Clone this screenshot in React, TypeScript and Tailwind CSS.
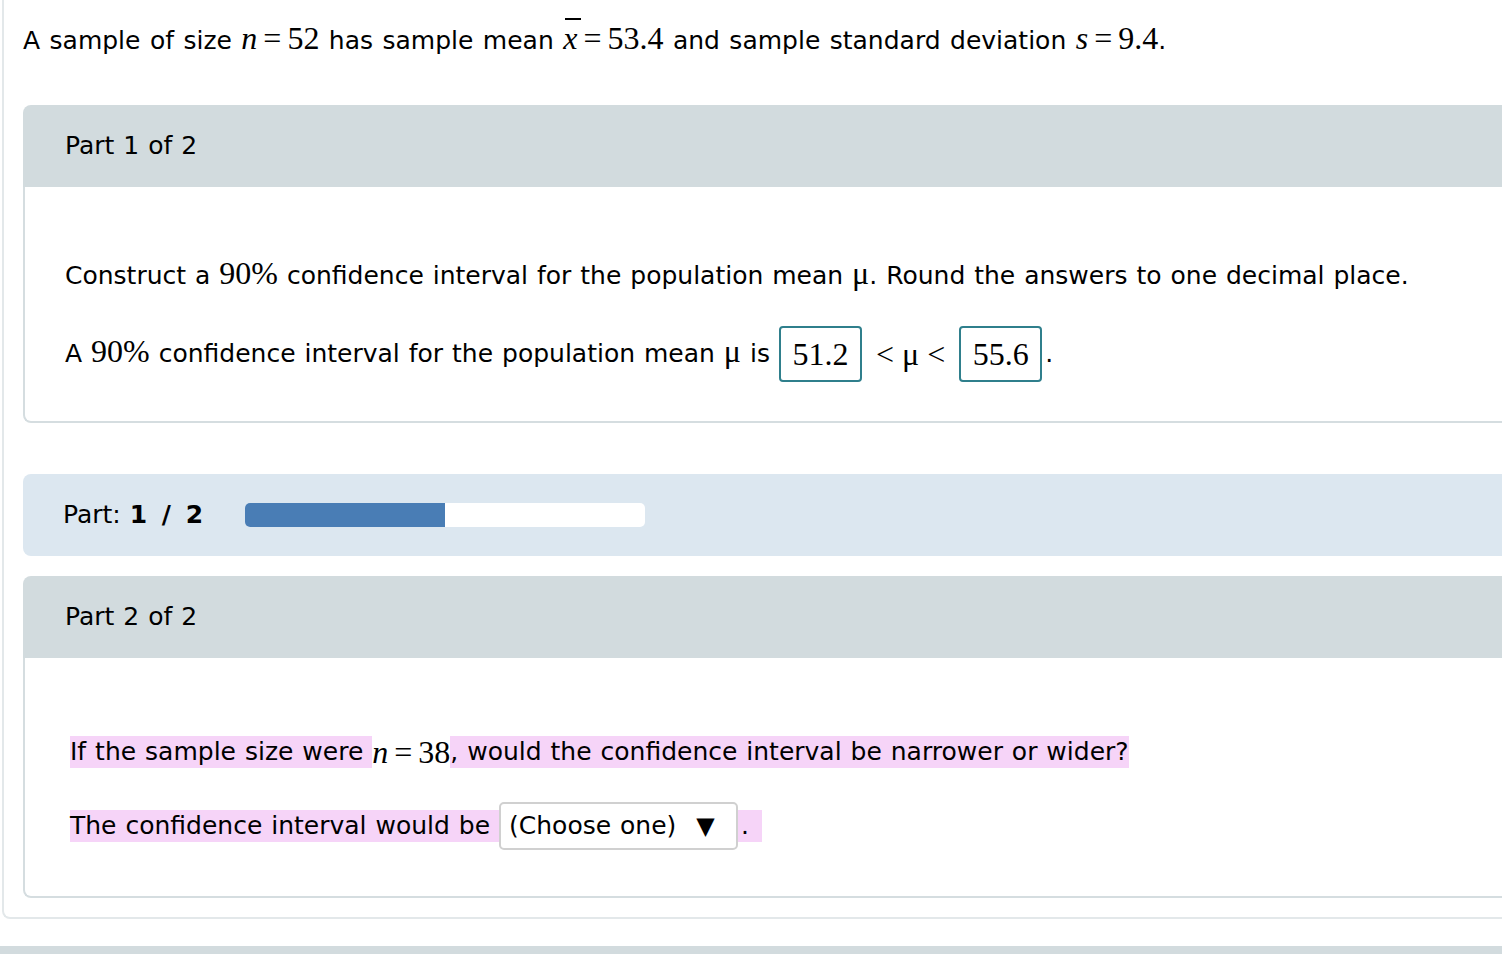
import React from "react";

const sans = "font-['DejaVu_Sans',Verdana,sans-serif]";
const serif = "font-['Liberation_Serif','Times_New_Roman',serif]";

function M({ children }: { children: React.ReactNode }) {
  return <span className={`${serif} text-[32px] leading-none`}>{children}</span>;
}

function V({ children }: { children: React.ReactNode }) {
  return <span className="font-['Liberation_Serif',serif] italic">{children}</span>;
}

function Eq({ v, val }: { v: React.ReactNode; val: string }) {
  return (
    <span className={`${serif} text-[32px] leading-none whitespace-nowrap [word-spacing:0]`}>
      {v}
      <span className="mx-[6px]">=</span>
      {val}
    </span>
  );
}

function XBar() {
  return (
    <span className="relative inline-block font-['Liberation_Serif',serif] italic">
      <span className="absolute left-[2px] right-[-4px] top-[-4px] h-[2px] bg-black" />
      x
    </span>
  );
}

function AnswerBox({ value }: { value: string }) {
  return (
    <span className="inline-flex h-[56px] w-[83px] items-center justify-center rounded-[4px] border-[2px] border-[#2f7f8c] bg-white">
      <span className={`${serif} text-[32px] leading-none`}>{value}</span>
    </span>
  );
}

function PartHeader({ label }: { label: string }) {
  return (
    <div className="flex h-[82px] items-center rounded-tl-[8px] bg-[#d2dbde] pl-[42px] text-[25px]">
      {label}
    </div>
  );
}

function Hl({ children, className = "" }: { children: React.ReactNode; className?: string }) {
  return <span className={`inline-block h-[32px] bg-[#f6d4f8] leading-[32px] ${className}`}>{children}</span>;
}

export default function App() {
  return (
    <div className={`relative h-[962px] w-[1502px] overflow-hidden bg-white text-black ${sans} [word-spacing:1px]`}>
      <div className="ml-[2px] w-[1600px] rounded-bl-[8px] border-b-[2px] border-l-[2px] border-[#e3e8ea] pb-[19px] pl-[19px] pt-[22px]">
        <p className="h-[36px] whitespace-nowrap text-[25px] leading-[36px] [word-spacing:1.5px]">
          A sample of size <Eq v={<V>n</V>} val="52" /> has sample mean{" "}
          <Eq v={<XBar />} val="53.4" /> and sample standard deviation <Eq v={<V>s</V>} val="9.4" />.
        </p>

        {/* Part 1 */}
        <div className="mt-[47px]">
          <PartHeader label="Part 1 of 2" />
          <div className="rounded-bl-[8px] border-b-[2px] border-l-[2px] border-[#d5dde0] pb-[39px] pl-[40px] pt-[70px] text-[25px]">
            <p className="h-[36px] whitespace-nowrap leading-[36px]">
              Construct a <M>90%</M> confidence interval for the population mean <M>μ</M>. Round the answers to one
              decimal place.
            </p>
            <div className="mt-[33px] flex h-[56px] items-center">
              <span className="whitespace-nowrap">
                A <M>90%</M> confidence interval for the population mean <M>μ</M> is
              </span>
              <span className="ml-[9px]">
                <AnswerBox value="51.2" />
              </span>
              <span className={`${serif} mx-[14px] text-[32px]`}>
                &lt;<span className="mx-[8px]">μ</span>&lt;
              </span>
              <AnswerBox value="55.6" />
              <span className="ml-[3px]">.</span>
            </div>
          </div>
        </div>

        {/* Progress */}
        <div className="mt-[51px] flex h-[82px] items-center rounded-l-[8px] bg-[#dce7f0] pl-[40px] text-[25px]">
          <span className="whitespace-nowrap">
            Part: <b className="[word-spacing:6px]">1 / 2</b>
          </span>
          <div className="ml-[42px] flex h-[24px] w-[400px] overflow-hidden rounded-[5px] bg-white">
            <div className="h-full w-[200px] bg-[#497db5]" />
          </div>
        </div>

        {/* Part 2 */}
        <div className="mt-[20px]">
          <PartHeader label="Part 2 of 2" />
          <div className="rounded-bl-[8px] border-b-[2px] border-l-[2px] border-[#d5dde0] pb-[46px] pl-[45px] pt-[78px] text-[25px]">
            <p className="flex h-[32px] items-center whitespace-pre">
              <Hl>If the sample size were </Hl>
              <Eq v={<V>n</V>} val="38" />
              <Hl>, would the confidence interval be narrower or wider?</Hl>
            </p>
            <div className="mt-[34px] flex h-[48px] items-center whitespace-pre">
              <Hl>The confidence interval would be </Hl>
              <span className="flex h-[48px] w-[239px] items-center rounded-[5px] border-[2px] border-[#d0d0d0] bg-white pl-[8px]">
                (Choose one)
                <span className="ml-[20px] text-[24px]">▼</span>
              </span>
              <Hl className="pl-[3px] pr-[13px]">.</Hl>
            </div>
          </div>
        </div>
      </div>
      <div className="mt-[27px] h-[8px] bg-[#d2dbde]" />
    </div>
  );
}
